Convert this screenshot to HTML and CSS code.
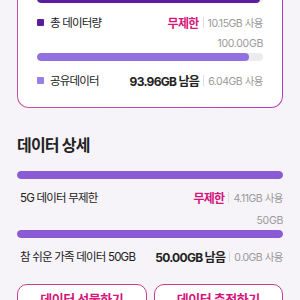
FILE: index.html
```html
<!DOCTYPE html>
<html lang="ko">
<head>
    <meta charset="UTF-8">
    <meta name="viewport" content="width=device-width, initial-scale=1.0">
    <title>데이터 사용량</title>
    <link rel="stylesheet" href="styles.css">
</head>
<body>
    <div class="page">
        <div class="card">
            <div class="bar"><div class="fill dark" style="width: 98.5%"></div></div>
            <div class="row">
                <div class="name"><span class="dot dark"></span>총 데이터량</div>
                <div class="value"><strong class="pink">무제한</strong><span class="sep"></span><span class="used">10.15GB 사용</span></div>
            </div>

            <div class="limit">100.00GB</div>
            <div class="bar"><div class="fill light" style="width: 94%"></div></div>
            <div class="row">
                <div class="name"><span class="dot light"></span>공유데이터</div>
                <div class="value"><strong>93.96GB 남음</strong><span class="sep"></span><span class="used">6.04GB 사용</span></div>
            </div>
        </div>

        <h2>데이터 상세</h2>

        <div class="detail">
            <div class="bar"><div class="fill mid" style="width: 100%"></div></div>
            <div class="row">
                <div class="name">5G 데이터 무제한</div>
                <div class="value"><strong class="pink">무제한</strong><span class="sep"></span><span class="used">4.11GB 사용</span></div>
            </div>

            <div class="limit">50GB</div>
            <div class="bar"><div class="fill mid" style="width: 100%"></div></div>
            <div class="row">
                <div class="name">참 쉬운 가족 데이터 50GB</div>
                <div class="value"><strong>50.00GB 남음</strong><span class="sep"></span><span class="used">0.0GB 사용</span></div>
            </div>
        </div>

        <div class="buttons">
            <button>데이터 선물하기</button>
            <button>데이터 충전하기</button>
        </div>
    </div>
</body>
</html>
```

FILE: styles.css
```css
body {
    margin: 0;
    background-color: #f6f4f9;
    font-family: Inter, "Noto Sans CJK KR", sans-serif;
    color: #222222;
}

.page {
    margin-top: -22px;
    padding: 0 17px;
}

.card {
    border: 1px solid transparent;
    border-radius: 12px;
    background: linear-gradient(#ffffff, #ffffff) padding-box,
                linear-gradient(to right, #c9509f, #b03fc0) border-box;
    padding: 16px 19px 17px;
}

.limit {
    height: 14px;
    line-height: 14px;
    font-size: 10.5px;
    letter-spacing: -0.3px;
    color: #999999;
    text-align: right;
    margin: 5px 0 2px;
}

.bar {
    height: 8px;
    border-radius: 4px;
    background-color: #ececef;
    overflow: hidden;
}

.fill {
    height: 100%;
    border-radius: 4px;
}

.fill.dark {
    background-color: #5a1d9f;
}

.fill.light {
    background-color: #9270e2;
}

.fill.mid {
    background-color: #8a5bd4;
}

.row {
    display: flex;
    justify-content: space-between;
    align-items: center;
    height: 20px;
    margin-top: 9px;
    white-space: nowrap;
}

.name {
    display: flex;
    align-items: center;
    font-size: 11.5px;
    letter-spacing: -0.8px;
}

.dot {
    width: 7px;
    height: 7px;
    border-radius: 1px;
    margin-right: 6px;
}

.dot.dark {
    background-color: #5a1d9f;
}

.dot.light {
    background-color: #9a7de8;
}

.value {
    display: flex;
    align-items: center;
    font-size: 12px;
    letter-spacing: -0.7px;
}

.value strong {
    font-weight: 700;
}

.pink {
    color: #d4167b;
}

.sep {
    width: 1px;
    height: 11px;
    background-color: #dddddd;
    margin: 0 4px;
}

.used {
    font-size: 10.5px;
    letter-spacing: -0.5px;
    color: #999999;
}

h2 {
    margin: 25px 0 0;
    height: 24px;
    line-height: 24px;
    font-size: 16px;
    font-weight: 700;
    letter-spacing: -0.8px;
}

.detail {
    margin-top: 14px;
}

.detail .row {
    margin-top: 8px;
}

.detail .limit {
    margin-top: 7px;
}

.detail .name {
    padding-left: 3px;
}

.buttons {
    display: flex;
    gap: 7px;
    margin-top: 18px;
}

.buttons button {
    flex: 1;
    height: 40px;
    padding: 6px 0 0;
    border: 1.5px solid #c63d90;
    border-radius: 10px;
    background-color: #ffffff;
    color: #d4167b;
    font-family: inherit;
    font-size: 13px;
    line-height: 16px;
    font-weight: 700;
    letter-spacing: -0.5px;
    display: flex;
    justify-content: center;
    align-items: flex-start;
}
```
